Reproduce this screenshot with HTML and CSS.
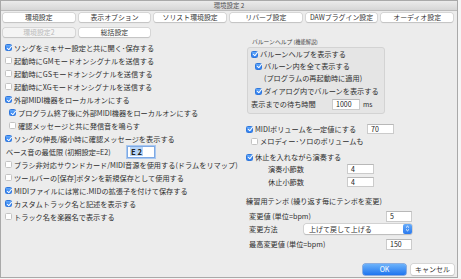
FILE: index.html
```html
<!DOCTYPE html>
<html lang="ja">
<head>
  <meta charset="UTF-8">
  <title>環境設定 2</title>
  <link rel="stylesheet" href="styles.css">
</head>
<body>

<div class="window">
  <div class="titlebar">環境設定 2</div>

  <div class="tabs">
    <button class="btn">環境設定</button>
    <button class="btn">表示オプション</button>
    <button class="btn">ソリスト環境設定</button>
    <button class="btn">リバーブ設定</button>
    <button class="btn">DAWプラグイン設定</button>
    <button class="btn">オーディオ設定</button>
    <button class="btn" disabled>環境設定2</button>
    <button class="btn">総括設定</button>
  </div>

  <div class="content">
    <div class="left">
      <div class="row"><span class="cb on"></span>ソングをミキサー設定と共に開く･保存する</div>
      <div class="row"><span class="cb"></span>起動時にGMモードオンシグナルを送信する</div>
      <div class="row"><span class="cb"></span>起動時にGSモードオンシグナルを送信する</div>
      <div class="row"><span class="cb"></span>起動時にXGモードオンシグナルを送信する</div>
      <div class="row"><span class="cb on"></span>外部MIDI機器をローカルオンにする</div>
      <div class="row sub"><span class="cb on"></span>プログラム終了後に外部MIDI機器をローカルオンにする</div>
      <div class="row sub"><span class="cb"></span>確認メッセージと共に発信音を鳴らす</div>
      <div class="row"><span class="cb on"></span>ソングの伸長/縮小時に確認メッセージを表示する</div>
      <div class="row plain">
        <span class="bass-label">ベース音の最低限 (初期設定=E2)</span>
        <span class="input focus"><span class="selected">E 2</span></span>
      </div>
      <div class="row"><span class="cb"></span>ブラシ非対応サウンドカード/MIDI音源を使用する(ドラムをリマップ)</div>
      <div class="row"><span class="cb"></span>ツールバーの[保存]ボタンを新規保存として使用する</div>
      <div class="row"><span class="cb on"></span>MIDIファイルには常に.MIDの拡張子を付けて保存する</div>
      <div class="row"><span class="cb on"></span>カスタムトラック名と記述を表示する</div>
      <div class="row"><span class="cb"></span>トラック名を楽器名で表示する</div>
    </div>

    <div class="right">
      <div class="group-label">バルーンヘルプ <small>(機能解説)</small></div>
      <div class="box">
        <div class="brow"><span class="cb on"></span>バルーンヘルプを表示する</div>
        <div class="brow sub"><span class="cb on"></span>バルーン内を全て表示する</div>
        <div class="brow cont">(プログラムの再起動時に適用)</div>
        <div class="brow sub gap"><span class="cb on"></span>ダイアログ内でバルーンを表示する</div>
        <div class="brow wait">
          <span class="wait-label">表示までの待ち時間</span>
          <span class="input w28">1000</span>
          <span class="unit">ms</span>
        </div>
      </div>

      <div class="rrow vol">
        <span class="cb on"></span><span class="vol-label">MIDIボリュームを一定値にする</span>
        <span class="input w27">70</span>
      </div>
      <div class="rrow melody"><span class="cb"></span>メロディー･ソロのボリュームも</div>

      <div class="rrow pause"><span class="cb on"></span>休止を入れながら演奏する</div>
      <div class="rrow bars">
        <span class="bars-label">演奏小節数</span><span class="input w27">4</span>
      </div>
      <div class="rrow bars second">
        <span class="bars-label">休止小節数</span><span class="input w27">4</span>
      </div>

      <div class="rrow tempo-title">練習用テンポ (繰り返す毎にテンポを変更)</div>
      <div class="tempo step">
        <span>変更値 (単位=bpm)</span><span class="input w26">5</span>
      </div>
      <div class="tempo method">
        <span>変更方法</span>
        <span class="select">
          上げて戻して上げる
          <span class="stepper">
            <svg width="5" height="7" viewBox="0 0 5 7"><path d="M1 2.6 2.5 1.2 4 2.6M1 4.4 2.5 5.8 4 4.4" fill="none" stroke="#fff" stroke-width="0.9"/></svg>
          </span>
        </span>
      </div>
      <div class="tempo max">
        <span>最高変更値 (単位=bpm)</span><span class="input w26">150</span>
      </div>

      <div class="actions">
        <button class="btn ok">OK</button>
        <button class="btn cancel">キャンセル</button>
      </div>
    </div>
  </div>
</div>

</body>
</html>
```

FILE: styles.css
```css
* {
  box-sizing: border-box;
}

body {
  margin: 0;
  background-color: #f5f5f5;
  font-family: "Noto Sans CJK JP", "Noto Sans", sans-serif;
  font-size: 7.2px;
  color: #2e2e2e;
}

.window {
  width: 458px;
  height: 278px;
  border: 1px solid #a9a9a9;
  background-color: #ececec;
  display: flex;
  flex-direction: column;
}

.titlebar {
  height: 10px;
  line-height: 9px;
  text-align: center;
  font-size: 6.4px;
  color: #4d4d4d;
  background: linear-gradient(#ebebeb, #d6d6d6);
  border-bottom: 1px solid #bcbcbc;
}

/* top buttons */
.tabs {
  display: grid;
  grid-template-columns: repeat(6, 1fr);
  column-gap: 4px;
  row-gap: 6px;
  padding: 2px 4px 0 2px;
  margin-bottom: 2px;
}

.btn {
  height: 9px;
  padding: 0;
  border: none;
  border-radius: 2px;
  background-color: #fff;
  box-shadow: 0 0 0 0.5px #c4c4c4, 0 0.5px 1px rgba(0, 0, 0, 0.18);
  font-family: inherit;
  font-size: 6.9px;
  line-height: 9px;
  color: #333;
}

.btn:disabled {
  background-color: #f4f4f4;
  color: #b9b9b9;
}

.content {
  display: flex;
}

/* left column */
.left {
  width: 245px;
  padding-top: 2px;
}

.row {
  height: 13px;
  display: flex;
  align-items: center;
  padding-left: 4px;
  white-space: nowrap;
}

.row.sub {
  padding-left: 8px;
}

.cb {
  flex: none;
  width: 7px;
  height: 7px;
  margin-right: 2px;
  border: 1px solid #c3c3c3;
  border-radius: 1.5px;
  background-color: #fff;
  position: relative;
}

.cb.on {
  border-color: #2f77dc;
  background: linear-gradient(#62a8f9, #2c7cf0);
}

.cb.on::after {
  content: "";
  position: absolute;
  left: 1.6px;
  top: -0.2px;
  width: 2px;
  height: 3.6px;
  border: solid #fff;
  border-width: 0 1.1px 1.1px 0;
  transform: rotate(40deg);
}

.bass-label {
  width: 122px;
  padding-left: 1px;
}

.input {
  flex: none;
  display: flex;
  align-items: center;
  background-color: #fff;
  border: 1px solid #cbcbcb;
  border-top-color: #b8b8b8;
  padding-left: 3px;
  font-size: 7px;
  color: #222;
}

.input.focus {
  width: 28px;
  height: 12px;
  border-color: #7ea9e4;
  box-shadow: 0 0 0 1px #a9c8f0;
  padding-left: 2px;
}

.selected {
  background-color: #b7d5f8;
  font-size: 7.6px;
  font-weight: bold;
  padding: 0 1px;
  line-height: 9px;
}

.w26 { width: 26px; height: 11px; }
.w27 { width: 27px; height: 10px; }
.w28 { width: 28px; height: 11px; }

/* right column */
.right {
  flex: 1;
}

.group-label {
  height: 6px;
  line-height: 6px;
  font-size: 5.8px;
  padding-left: 6px;
  color: #444;
}

.group-label small {
  font-size: 5.2px;
}

.box {
  width: 138px;
  height: 67px;
  margin: 2px 0 0 1px;
  border: 1px solid #d3d3d3;
  border-radius: 3px;
  background-color: #e5e5e5;
}

.brow {
  height: 12px;
  display: flex;
  align-items: center;
  padding-left: 3px;
  white-space: nowrap;
}

.brow.sub {
  padding-left: 7px;
}

.brow.cont {
  height: 11px;
  padding-left: 16px;
}

.brow.gap {
  margin-top: 2px;
}

.brow.wait {
  height: 14px;
}

.wait-label {
  width: 81px;
}

.unit {
  margin-left: 3px;
  font-size: 6.8px;
}

.rrow {
  height: 12px;
  display: flex;
  align-items: center;
  white-space: nowrap;
}

.vol {
  margin-top: 9px;
}

.vol-label {
  width: 112px;
}

.melody {
  padding-left: 5px;
}

.pause {
  margin-top: 4px;
}

.bars {
  height: 11px;
  padding-left: 22px;
}

.bars.second {
  margin-top: 2px;
}

.bars-label {
  width: 79px;
}

.tempo-title {
  margin-top: 8px;
}

.tempo {
  width: 166px;
  height: 12px;
  display: flex;
  align-items: center;
  justify-content: space-between;
  padding-left: 3px;
  white-space: nowrap;
}

.tempo.step {
  margin-top: 3px;
}

.tempo.method {
  height: 11px;
  margin-top: 1px;
}

.tempo.max {
  margin-top: 4px;
}

.select {
  width: 108px;
  height: 10px;
  display: flex;
  align-items: center;
  padding-left: 5px;
  border-radius: 2px;
  background-color: #fff;
  box-shadow: 0 0 0 0.5px #bdbdbd, 0 0.5px 1px rgba(0, 0, 0, 0.2);
  font-size: 7px;
}

.stepper {
  margin-left: auto;
  width: 9px;
  height: 10px;
  display: flex;
  align-items: center;
  justify-content: center;
  border-radius: 2px;
  background: linear-gradient(#68acf9, #2a79ee);
}

.actions {
  margin-top: 14px;
  display: flex;
  justify-content: flex-end;
  gap: 5px;
  padding-right: 3px;
}

.actions .btn {
  width: 43px;
  height: 11px;
  line-height: 11px;
  font-size: 7px;
}

.btn.ok {
  background: linear-gradient(#6cb2fa, #1f75ef);
  box-shadow: 0 0 0 0.5px #2a6fd4;
  color: #fff;
}
```
